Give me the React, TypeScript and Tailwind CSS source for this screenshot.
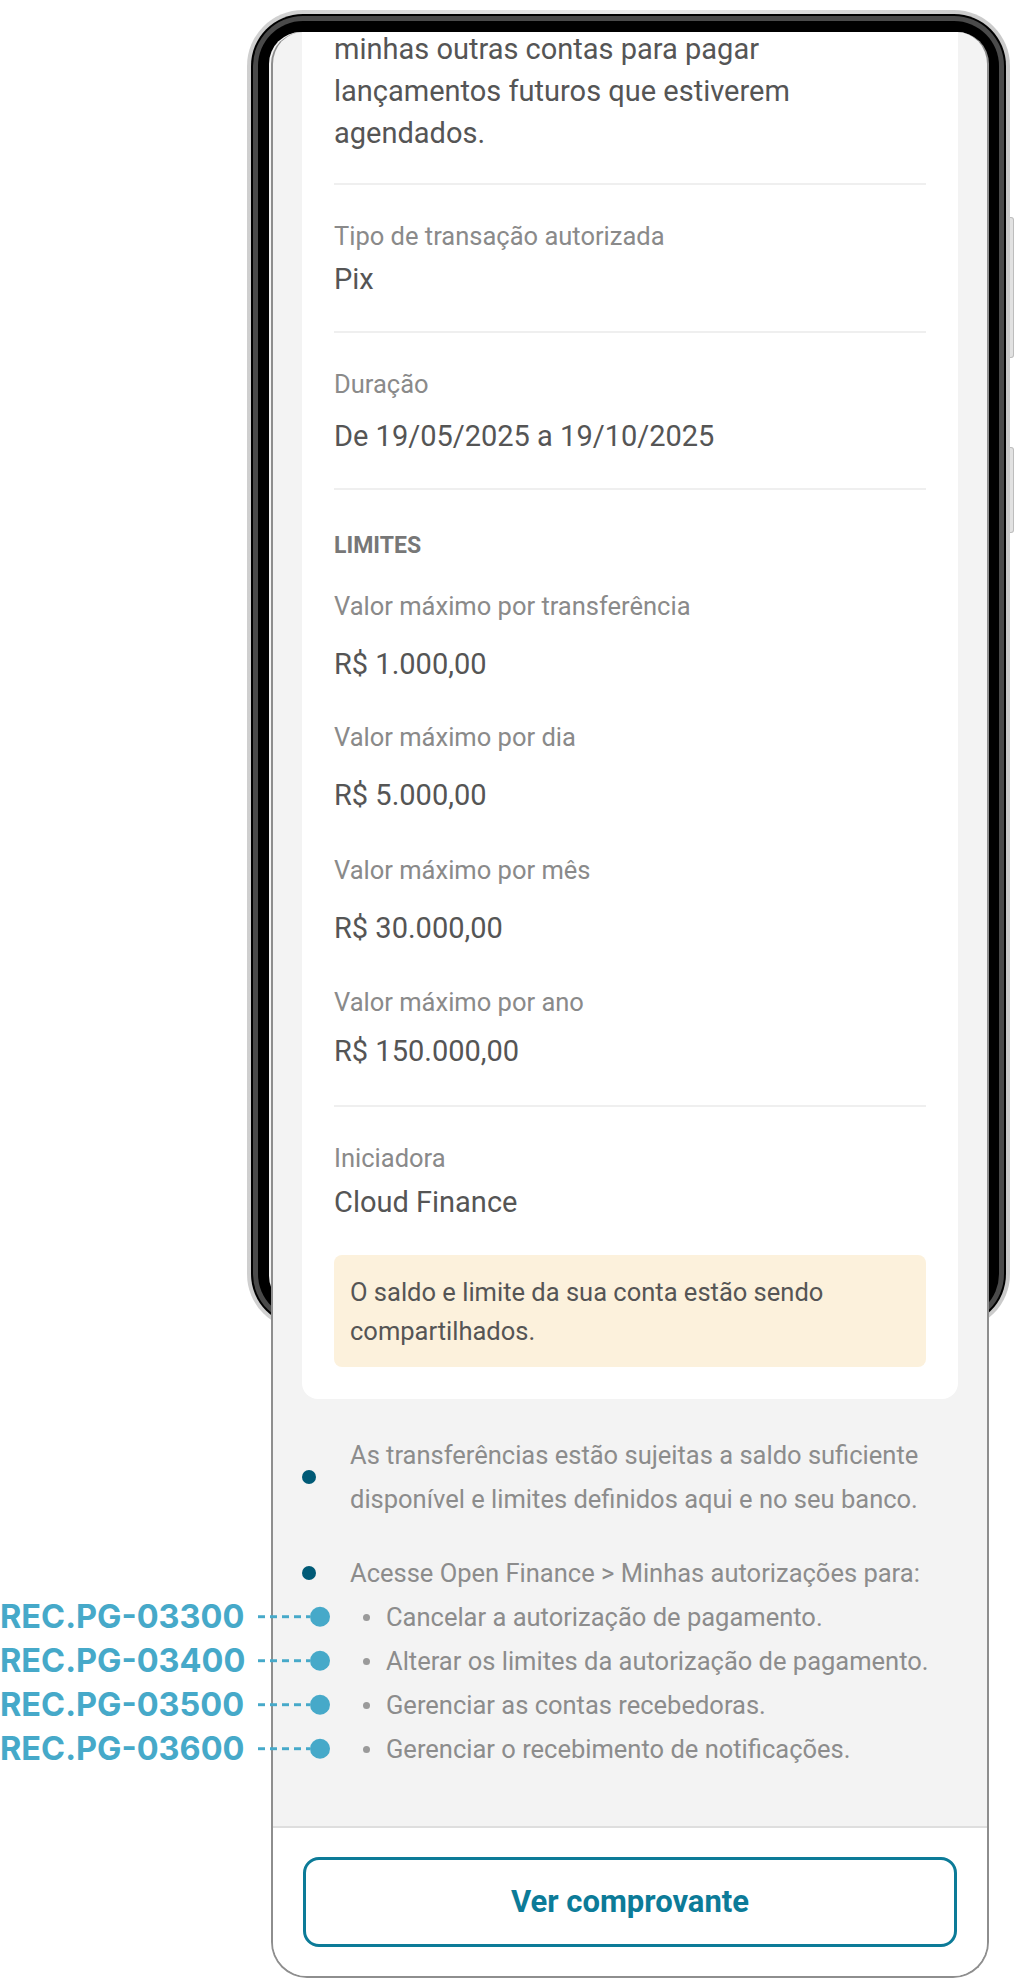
import React from "react";

const subItems = [
  { code: "REC.PG-03300", text: "Cancelar a autorização de pagamento." },
  { code: "REC.PG-03400", text: "Alterar os limites da autorização de pagamento." },
  { code: "REC.PG-03500", text: "Gerenciar as contas recebedoras." },
  { code: "REC.PG-03600", text: "Gerenciar o recebimento de notificações." },
];

function Connector() {
  return (
    <svg width="52" height="4" viewBox="0 0 52 4" className="block">
      <line x1="0" y1="2" x2="52" y2="2" stroke="#46a9c9" strokeWidth="3" strokeDasharray="7 5" />
    </svg>
  );
}

export default function App() {
  return (
    <div className="relative w-[1016px] h-[1980px] overflow-hidden bg-white [font-family:Roboto,'Noto_Sans',sans-serif]">
      {/* phone frame (decoration behind the screen panel) */}
      <div className="absolute left-[247px] top-[10px] w-[763px] h-[1320px] rounded-[56px] bg-gradient-to-r from-[#cfcfcf] via-[#e9e9e9] to-[#c9c9c9] p-[4px]">
        <div className="h-full w-full rounded-[52px] bg-black p-[2px]">
          <div className="h-full w-full rounded-[50px] bg-[#4a4a4a] p-[5px]">
            <div className="h-full w-full rounded-[45px] bg-black p-[11px]">
              <div className="h-full w-full rounded-[32px] bg-[#f3f3f3]" />
            </div>
          </div>
        </div>
      </div>
      <div className="absolute left-[1010px] top-[217px] h-[141px] w-[4px] rounded-r-[3px] border border-l-0 border-[#bdbdbd] bg-[#e2e2e2]" />
      <div className="absolute left-[1010px] top-[447px] h-[86px] w-[4px] rounded-r-[3px] border border-l-0 border-[#bdbdbd] bg-[#e2e2e2]" />

      {/* screen panel */}
      <div className="relative z-10 ml-[271px] mt-[32px] w-[718px] rounded-t-[32px] rounded-b-[36px] border-x-2 border-b-2 border-[#8e8e8e] bg-[#f3f3f3]">
        <div className="overflow-hidden rounded-t-[30px]">
          <div className="mx-[29px] rounded-b-[16px] bg-white px-[32px] pb-[32px]">
            <p className="-mt-[4px] pb-[29px] text-[29px] leading-[42px] text-[#555555]">
              minhas outras contas para pagar
              <br />
              lançamentos futuros que estiverem
              <br />
              agendados.
            </p>
            <div className="h-[2px] bg-[#efefef]" />

            <div className="pt-[33px] pb-[30px]">
              <p className="text-[25.5px] leading-[36px] text-[#8a8a8a]">Tipo de transação autorizada</p>
              <p className="mt-[4px] text-[29px] leading-[43px] text-[#555555]">Pix</p>
            </div>
            <div className="h-[2px] bg-[#efefef]" />

            <div className="pt-[33px] pb-[30px]">
              <p className="text-[25.5px] leading-[36px] text-[#8a8a8a]">Duração</p>
              <p className="mt-[13px] text-[29px] leading-[43px] text-[#555555]">De 19/05/2025 a 19/10/2025</p>
            </div>
            <div className="h-[2px] bg-[#efefef]" />

            <div className="pt-[40px] pb-[32px]">
              <p className="text-[23px] font-bold leading-[32px] text-[#777777]">LIMITES</p>
              <p className="mt-[26px] text-[25.5px] leading-[36px] text-[#8a8a8a]">Valor máximo por transferência</p>
              <p className="mt-[19px] text-[29px] leading-[43px] text-[#555555]">R$ 1.000,00</p>
              <p className="mt-[33px] text-[25.5px] leading-[36px] text-[#8a8a8a]">Valor máximo por dia</p>
              <p className="mt-[19px] text-[29px] leading-[43px] text-[#555555]">R$ 5.000,00</p>
              <p className="mt-[35px] text-[25.5px] leading-[36px] text-[#8a8a8a]">Valor máximo por mês</p>
              <p className="mt-[19px] text-[29px] leading-[43px] text-[#555555]">R$ 30.000,00</p>
              <p className="mt-[34px] text-[25.5px] leading-[36px] text-[#8a8a8a]">Valor máximo por ano</p>
              <p className="mt-[10px] text-[29px] leading-[43px] text-[#555555]">R$ 150.000,00</p>
            </div>
            <div className="h-[2px] bg-[#efefef]" />

            <div className="pt-[33px]">
              <p className="text-[25.5px] leading-[36px] text-[#8a8a8a]">Iniciadora</p>
              <p className="mt-[5px] text-[29px] leading-[43px] text-[#555555]">Cloud Finance</p>
            </div>

            <div className="mt-[31px] rounded-[8px] bg-[#fcf1dc] px-[16px] pt-[18px] pb-[16px]">
              <p className="text-[25.5px] leading-[39px] text-[#555555]">
                O saldo e limite da sua conta estão sendo
                <br />
                compartilhados.
              </p>
            </div>
          </div>
        </div>

        {/* notes */}
        <div className="px-[30px] pt-[34px] pb-[55px] text-[25.5px] text-[#8c8c8c]">
          <div className="flex items-center">
            <span className="ml-[-1px] h-[14px] w-[14px] shrink-0 rounded-full bg-[#005a76]" />
            <p className="ml-[34px] leading-[44px]">
              As transferências estão sujeitas a saldo suficiente
              <br />
              disponível e limites definidos aqui e no seu banco.
            </p>
          </div>
          <div className="mt-[30px] flex items-center">
            <span className="ml-[-1px] h-[14px] w-[14px] shrink-0 rounded-full bg-[#005a76]" />
            <p className="ml-[34px] whitespace-nowrap leading-[44px]">
              Acesse Open Finance &gt; Minhas autorizações para:
            </p>
          </div>
          <ul>
            {subItems.map((it) => (
              <li key={it.code} className="relative flex h-[44px] items-center">
                <span className="ml-[60px] h-[7px] w-[7px] shrink-0 rounded-full bg-[#9a9a9a]" />
                <span className="ml-[16px] whitespace-nowrap">{it.text}</span>
                <div className="absolute left-[-303px] top-1/2 flex -translate-y-1/2 items-center">
                  <span className="w-[240px] whitespace-nowrap text-[32.5px] font-bold leading-none text-[#46a9c9] [font-family:Inter,Roboto,sans-serif]">
                    {it.code}
                  </span>
                  <span className="ml-[18px]">
                    <Connector />
                  </span>
                  <span className="h-[20px] w-[20px] rounded-full bg-[#46a9c9]" />
                </div>
              </li>
            ))}
          </ul>
        </div>

        {/* footer */}
        <div className="rounded-b-[34px] border-t-2 border-[#dedede] bg-white px-[30px] pt-[29px] pb-[29px]">
          <button className="flex h-[90px] w-full items-center justify-center rounded-[16px] border-[3px] border-[#0c7b98] text-[31px] font-bold text-[#0c7b98]">
            Ver comprovante
          </button>
        </div>
      </div>
    </div>
  );
}
